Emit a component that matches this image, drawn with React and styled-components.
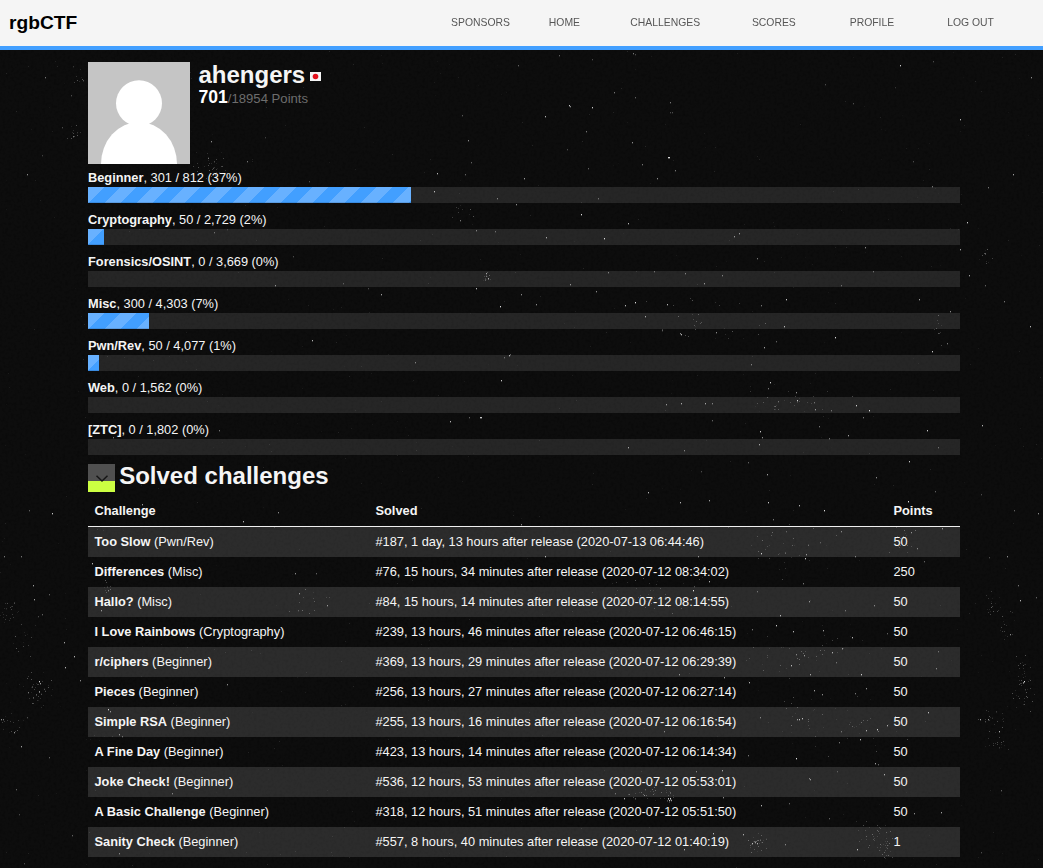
import React from "react";
import styled, { createGlobalStyle } from "styled-components";

const GlobalStyle = createGlobalStyle`
  * { box-sizing: border-box; }
  html, body { margin: 0; padding: 0; }
  body {
    background: #0c0c0c;
    color: #f5f5f5;
    font-family: "Liberation Sans", Arial, sans-serif;
    font-size: 12.8px;
    line-height: 18px;
  }
`;

const Page = styled.div`
  position: relative;
  height: 868px;
  overflow: hidden;
`;

const Dust = styled.svg`
  position: absolute;
  inset: 0;
  z-index: -1;
`;

const Header = styled.header`
  display: flex;
  justify-content: space-between;
  height: 50px;
  padding-left: 9px;
  background: #f5f5f5;
  border-bottom: 4px solid #429fff;
`;

const Brand = styled.div`
  color: #000;
  font-size: 19.2px;
  font-weight: bold;
  line-height: 45px;
`;

const Nav = styled.nav`
  display: grid;
  grid-template-columns: 97.8px 81.4px 121.7px 97.8px 97.5px 95.8px;
  font-size: 10.4px;
  line-height: 46px;
  color: #555;
  text-transform: uppercase;
`;

const NavItem = styled.a`
  opacity: 0.99;
`;

const Main = styled.main`
  width: 872px;
  margin: 12px 0 0 88px;
`;

const Profile = styled.section`
  display: flex;
  gap: 8.5px;
  height: 102px;
  margin-bottom: 3px;
`;

const UserName = styled.h2`
  display: flex;
  align-items: center;
  gap: 5px;
  margin: 0;
  font-size: 24px;
  line-height: 26px;
`;

const FlagIcon = styled.svg`
  margin-top: 2px;
`;

const Score = styled.div`
  color: #6d6d6d;
  font-size: 13.12px;
  line-height: 20px;
  height: 20px;
  margin-top: -1px;
`;

const ScoreValue = styled.b`
  color: #fff;
  font-size: 17.6px;
`;

const Category = styled.section`
  height: 42px;
`;

const CategoryLabel = styled.div`
  height: 20px;
  line-height: 18px;
  padding-top: 2px;
`;

const Track = styled.div`
  height: 16px;
  background: rgba(255, 255, 255, 0.105);
`;

const Fill = styled.div`
  height: 16px;
  background: linear-gradient(
      135deg,
      #68b1ff 25%,
      #429fff 25%,
      #429fff 50%,
      #68b1ff 50%,
      #68b1ff 75%,
      #429fff 75%
    )
    0 0 / 32px 32px;
  box-shadow: inset 0 -1px 0 rgba(0, 0, 0, 0.12);
`;

const SolvedHeading = styled.div`
  display: flex;
  align-items: flex-start;
  gap: 4.2px;
  height: 32px;
  margin-top: 3px;

  h2 {
    margin: 0;
    font-size: 24px;
    line-height: 23px;
  }
`;

const Toggle = styled.button`
  display: flex;
  width: 27px;
  height: 28px;
  padding: 0;
  border: 0;
  background: linear-gradient(#505050 17px, #ccff42 17px);
`;

const Table = styled.table`
  width: 100%;
  table-layout: fixed;
  border-collapse: separate;
  border-spacing: 0;
  text-align: left;

  th, td {
    height: 30px;
    padding: 0 6.5px;
    line-height: 18px;
  }

  th {
    height: 31px;
    border-bottom: 1px solid #f0f0f0;
  }

  tbody tr:nth-child(odd) {
    background: rgba(255, 255, 255, 0.13);
  }
`;

const NAV = ["Sponsors", "Home", "Challenges", "Scores", "Profile", "Log out"];

const CATEGORIES = [
  ["Beginner", "301 / 812 (37%)", 323],
  ["Cryptography", "50 / 2,729 (2%)", 16],
  ["Forensics/OSINT", "0 / 3,669 (0%)", 0],
  ["Misc", "300 / 4,303 (7%)", 61],
  ["Pwn/Rev", "50 / 4,077 (1%)", 11],
  ["Web", "0 / 1,562 (0%)", 0],
  ["[ZTC]", "0 / 1,802 (0%)", 0],
];

const SOLVES = [
  ["Too Slow", "Pwn/Rev", "#187, 1 day, 13 hours after release (2020-07-13 06:44:46)", 50],
  ["Differences", "Misc", "#76, 15 hours, 34 minutes after release (2020-07-12 08:34:02)", 250],
  ["Hallo?", "Misc", "#84, 15 hours, 14 minutes after release (2020-07-12 08:14:55)", 50],
  ["I Love Rainbows", "Cryptography", "#239, 13 hours, 46 minutes after release (2020-07-12 06:46:15)", 50],
  ["r/ciphers", "Beginner", "#369, 13 hours, 29 minutes after release (2020-07-12 06:29:39)", 50],
  ["Pieces", "Beginner", "#256, 13 hours, 27 minutes after release (2020-07-12 06:27:14)", 50],
  ["Simple RSA", "Beginner", "#255, 13 hours, 16 minutes after release (2020-07-12 06:16:54)", 50],
  ["A Fine Day", "Beginner", "#423, 13 hours, 14 minutes after release (2020-07-12 06:14:34)", 50],
  ["Joke Check!", "Beginner", "#536, 12 hours, 53 minutes after release (2020-07-12 05:53:01)", 50],
  ["A Basic Challenge", "Beginner", "#318, 12 hours, 51 minutes after release (2020-07-12 05:51:50)", 50],
  ["Sanity Check", "Beginner", "#557, 8 hours, 40 minutes after release (2020-07-12 01:40:19)", 1],
];

// Single dust specks: x, y, brightness.
const SPECKS = [
  [45, 77, 0.5], [73, 66, 0.2], [83, 80, 0.35], [71, 95, 0.3], [62, 127, 0.3], [73, 136, 0.5], [77, 132, 0.2],
  [42, 155, 0.25], [27, 174, 0.6], [211, 141, 0.6], [247, 161, 0.5], [265, 137, 0.25], [309, 181, 0.3],
  [559, 55, 0.4], [633, 53, 0.5], [635, 54, 0.3], [592, 59, 0.3], [518, 65, 0.4], [900, 65, 0.9], [933, 61, 0.3],
  [1031, 77, 0.6], [825, 84, 0.3], [895, 87, 0.2], [614, 92, 0.5], [635, 97, 0.4], [569, 105, 0.9], [570, 106, 0.6],
  [592, 107, 0.9], [670, 102, 0.5], [670, 112, 0.3], [672, 112, 0.3], [462, 115, 0.35], [545, 116, 0.8],
  [853, 103, 0.3], [960, 119, 0.8], [586, 131, 0.5], [468, 140, 0.6], [632, 142, 0.6], [567, 149, 0.3],
  [668, 157, 1], [669, 157, 1], [471, 162, 0.4], [588, 168, 0.4], [642, 164, 0.5], [675, 170, 0.5], [437, 173, 0.8],
  [465, 174, 0.4], [524, 178, 0.7], [657, 178, 0.6], [1013, 174, 0.7], [988, 187, 0.5], [913, 161, 0.3],
  [434, 191, 0.8], [497, 198, 0.5], [598, 198, 0.4], [516, 204, 0.6], [932, 186, 0.5], [581, 214, 1],
  [460, 220, 0.5], [628, 223, 0.8], [967, 222, 0.9], [476, 230, 0.5], [495, 231, 0.4], [546, 237, 0.7],
  [604, 238, 1], [734, 236, 0.6], [739, 233, 0.6], [865, 247, 0.6], [960, 249, 0.7], [985, 253, 0.4],
  [757, 258, 0.5], [214, 232, 0.4], [227, 229, 0.2], [293, 256, 0.3], [275, 285, 0.6], [343, 283, 0.3],
  [488, 278, 0.7], [486, 273, 0.6], [608, 272, 0.5], [654, 271, 0.4], [685, 273, 0.5], [722, 275, 0.5],
  [704, 283, 0.6], [873, 271, 0.4], [841, 285, 0.4], [570, 284, 0.6], [969, 275, 0.7], [985, 285, 0.4],
  [476, 288, 0.8], [596, 291, 0.6], [521, 294, 0.6], [381, 294, 0.7], [500, 306, 1], [536, 304, 0.6],
  [625, 305, 0.8], [635, 302, 1], [667, 304, 0.8], [786, 299, 0.9], [761, 305, 0.5], [919, 299, 0.7],
  [1004, 301, 0.5], [950, 311, 0.6], [368, 288, 0.3], [645, 316, 0.7], [784, 326, 0.8],
  [1030, 326, 0.8], [662, 330, 0.4], [680, 333, 0.6], [681, 334, 0.8], [716, 332, 0.6], [835, 337, 1],
  [764, 347, 0.7], [776, 341, 0.4], [932, 351, 0.9], [947, 343, 0.5], [312, 340, 0.8], [415, 362, 0.5],
  [509, 355, 0.8], [510, 354, 0.4], [504, 357, 0.4], [751, 364, 0.5], [501, 380, 0.9], [770, 382, 0.9],
  [768, 388, 0.5], [796, 392, 0.6], [797, 400, 0.9], [712, 403, 0.5], [666, 404, 0.6], [681, 403, 0.7],
  [705, 403, 0.7], [856, 405, 0.9], [869, 410, 1], [778, 401, 0.4], [814, 402, 0.4], [815, 409, 0.6],
  [831, 410, 0.4], [480, 417, 0.9], [481, 417, 0.9], [450, 421, 0.8], [469, 417, 0.4], [863, 417, 0.5],
  [712, 420, 0.4], [819, 426, 0.5], [760, 431, 0.9], [762, 437, 0.6], [927, 430, 0.9], [848, 435, 0.7],
  [829, 438, 0.5], [759, 444, 0.7], [628, 447, 0.7], [684, 450, 0.5], [938, 447, 0.4],
  [909, 461, 0.9], [748, 462, 0.4], [701, 471, 0.3], [648, 492, 0.8], [680, 502, 0.8], [709, 500, 0.7],
  [768, 502, 0.9], [799, 505, 0.8], [824, 510, 1], [908, 501, 1], [935, 491, 0.4], [1038, 513, 0.6],
  [1014, 510, 0.4], [981, 494, 0.3], [773, 519, 0.5], [786, 531, 0.3], [841, 531, 0.5], [942, 528, 0.6],
  [820, 542, 0.3], [761, 553, 0.9], [805, 558, 0.9], [806, 554, 0.6], [698, 556, 0.6], [855, 556, 0.5],
  [911, 532, 0.5], [917, 548, 0.5], [1007, 556, 0.6], [989, 557, 0.3], [924, 561, 0.4], [709, 581, 0.8],
  [693, 590, 1], [803, 583, 0.5], [695, 571, 0.3], [757, 591, 0.4], [809, 601, 0.6], [780, 615, 0.8],
  [845, 610, 0.4], [874, 605, 0.5], [1018, 585, 0.5], [1020, 600, 0.8], [1036, 597, 0.4], [776, 625, 0.9],
  [752, 629, 0.5], [793, 631, 0.8], [823, 630, 0.7], [852, 637, 0.8], [887, 633, 0.4], [1010, 634, 0.6],
  [832, 652, 0.7], [842, 648, 0.6], [836, 662, 0.4], [796, 654, 0.5], [804, 655, 0.6], [791, 665, 0.8],
  [810, 674, 0.7], [861, 674, 0.9], [724, 677, 0.7], [679, 674, 0.6], [749, 682, 0.8], [936, 668, 0.5],
  [938, 651, 0.4], [814, 690, 0.7], [822, 694, 0.6], [866, 688, 0.6], [855, 693, 0.5], [928, 712, 0.8],
  [797, 719, 0.6], [799, 719, 0.8], [802, 718, 0.8], [760, 717, 0.5], [877, 729, 0.9], [866, 730, 0.7],
  [887, 725, 0.7], [841, 731, 0.4], [860, 739, 0.8], [839, 742, 0.5], [664, 731, 0.5], [748, 755, 0.5],
  [796, 758, 1], [875, 763, 0.7], [878, 764, 0.4], [810, 779, 0.6], [809, 778, 0.5], [884, 774, 0.7],
  [696, 771, 0.5], [722, 770, 0.7], [837, 771, 0.3], [723, 797, 0.6], [761, 805, 0.8], [789, 803, 0.4],
  [624, 798, 0.8], [615, 793, 0.4], [914, 813, 0.6], [941, 812, 0.7], [829, 818, 0.4], [743, 834, 0.7],
  [785, 844, 0.5], [857, 849, 0.8], [684, 849, 0.7], [757, 843, 0.7], [713, 833, 0.8], [1001, 790, 0.4],
  [668, 798, 0.9], [670, 798, 0.9], [669, 800, 0.8], [671, 800, 0.5], [752, 843, 0.8], [755, 842, 0.6],
  [981, 852, 0.3], [982, 425, 0.8], [980, 719, 0.7], [988, 719, 0.6], [999, 731, 0.8], [1024, 681, 1],
  [1023, 682, 0.6], [29, 510, 0.4], [52, 513, 0.9], [4, 556, 0.5], [21, 556, 0.5], [33, 585, 0.7],
  [34, 599, 0.7], [49, 594, 0.4], [42, 614, 0.4], [38, 616, 0.3], [64, 642, 0.7], [74, 656, 0.8],
  [65, 667, 0.8], [80, 680, 0.6], [92, 563, 0.8], [39, 681, 1], [40, 683, 0.7], [39, 691, 0.6], [28, 692, 0.5],
  [1, 719, 0.6], [3, 719, 0.5], [14, 732, 0.6], [21, 746, 0.7], [27, 717, 0.3], [49, 757, 0.4], [16, 789, 0.4],
  [19, 814, 0.3], [72, 835, 0.4], [24, 863, 0.3], [108, 709, 0.9], [110, 711, 0.6], [119, 734, 0.6],
  [122, 736, 0.4], [139, 772, 0.4], [227, 684, 0.6], [101, 610, 0.6], [108, 590, 0.5], [102, 599, 0.3],
  [172, 793, 0.5], [119, 853, 0.5], [243, 521, 0.8], [142, 504, 0.7], [278, 512, 0.6], [274, 526, 0.5],
  [298, 610, 0.3], [327, 605, 0.6], [299, 593, 0.6], [316, 573, 0.4], [295, 573, 0.6], [219, 430, 0.5],
  [113, 437, 0.5], [220, 473, 0.3], [876, 477, 0.6], [767, 474, 0.7], [545, 556, 0.8], [521, 524, 0.6],
  [585, 545, 0.4], [470, 573, 0.6],
];

// Patches of fine scratches: centre x, centre y, spread x, spread y, count.
const CLUSTERS = [
  [209, 166, 18, 22, 40], [310, 600, 24, 20, 12], [487, 276, 6, 6, 16], [992, 605, 10, 16, 20],
  [1005, 625, 14, 20, 14], [1022, 665, 10, 18, 14], [1022, 690, 14, 24, 34], [992, 722, 16, 18, 24],
  [997, 745, 16, 8, 14], [875, 836, 22, 16, 34], [886, 850, 10, 10, 20], [753, 842, 14, 12, 28],
  [650, 794, 28, 9, 34], [669, 799, 3, 3, 12], [38, 688, 20, 20, 44], [8, 612, 12, 14, 24],
  [22, 640, 12, 20, 12], [8, 725, 18, 22, 20], [107, 586, 6, 20, 16], [640, 595, 70, 22, 40],
  [800, 655, 60, 24, 34], [840, 725, 70, 34, 44], [795, 400, 70, 22, 28], [700, 320, 70, 28, 28],
  [905, 540, 20, 20, 18], [780, 550, 60, 30, 30], [80, 78, 10, 10, 8], [74, 132, 8, 10, 10],
  [986, 258, 12, 12, 10], [938, 325, 8, 22, 10], [462, 213, 14, 14, 10],
];

const scatter = () => {
  let seed = 71;
  const next = () => {
    seed = (seed * 16807) % 2147483647;
    return seed / 2147483647;
  };
  const marks = [];
  CLUSTERS.forEach(([cx, cy, rx, ry, count]) => {
    for (let i = 0; i < count; i += 1) {
      const dx = (next() + next() - 1) * rx;
      const dy = (next() + next() - 1) * ry;
      marks.push([Math.round(cx + dx), Math.round(cy + dy), 0.06 + next() * 0.25]);
    }
  });
  for (let i = 0; i < 650; i += 1) {
    marks.push([Math.floor(next() * 1043), 50 + Math.floor(next() * 818), 0.02 + next() * 0.09]);
  }
  return marks;
};

const FAINT = scatter();

const DustLayer = () => (
  <Dust width="1043" height="868" shapeRendering="crispEdges" aria-hidden="true">
    <filter id="grain" x="0" y="0" width="100%" height="100%">
      <feTurbulence type="fractalNoise" baseFrequency="0.35" numOctaves="2" seed="4" />
      <feColorMatrix values="0 0 0 0 0  0 0 0 0 0  0 0 0 0 0  2 0 0 0 -0.95" />
    </filter>
    <rect width="1043" height="868" fill="#0d0d0d" />
    <rect width="1043" height="868" filter="url(#grain)" opacity="0.3" />
    {FAINT.map(([x, y, a], i) => (
      <rect key={i} x={x} y={y} width="1" height="1" fill="#fff" opacity={a} />
    ))}
    {SPECKS.map(([x, y, a], i) => (
      <g key={i} fill="#fff">
        <rect x={x} y={y} width="1" height="1" opacity={a * 0.85} />
        <rect x={x} y={y + 1} width="1" height="1" opacity={a * 0.3} />
      </g>
    ))}
  </Dust>
);

const Avatar = () => (
  <svg width="102" height="102" viewBox="0 0 102 102">
    <rect width="102" height="102" fill="#c5c5c5" />
    <circle cx="51" cy="41.2" r="23" fill="#fff" />
    <ellipse cx="51" cy="102" rx="38" ry="42" fill="#fff" />
  </svg>
);

const Flag = () => (
  <FlagIcon width="11" height="9" viewBox="0 0 11 9">
    <rect width="11" height="9" fill="#f5f5f5" />
    <circle cx="5.5" cy="4.5" r="2.8" fill="#e3101c" />
  </FlagIcon>
);

const Chevron = () => (
  <svg width="27" height="28" viewBox="0 0 27 28" fill="none">
    <path d="M8.5 11.8L14 17L19.5 11.8" stroke="#161616" strokeWidth="1.5" />
  </svg>
);

export default function App() {
  return (
    <Page>
      <GlobalStyle />
      <DustLayer />
      <Header>
        <Brand>rgbCTF</Brand>
        <Nav>
          {NAV.map((label) => (
            <NavItem key={label}>{label}</NavItem>
          ))}
        </Nav>
      </Header>
      <Main>
        <Profile>
          <Avatar />
          <div>
            <UserName>
              ahengers
              <Flag />
            </UserName>
            <Score>
              <ScoreValue>701</ScoreValue>/18954 Points
            </Score>
          </div>
        </Profile>
        {CATEGORIES.map(([name, stats, width]) => (
          <Category key={name}>
            <CategoryLabel>
              <b>{name}</b>, {stats}
            </CategoryLabel>
            <Track>
              <Fill style={{ width }} />
            </Track>
          </Category>
        ))}
        <SolvedHeading>
          <Toggle aria-label="Toggle solved challenges">
            <Chevron />
          </Toggle>
          <h2>Solved challenges</h2>
        </SolvedHeading>
        <Table>
          <colgroup>
            <col style={{ width: 281 }} />
            <col style={{ width: 518 }} />
            <col />
          </colgroup>
          <thead>
            <tr>
              <th>Challenge</th>
              <th>Solved</th>
              <th>Points</th>
            </tr>
          </thead>
          <tbody>
            {SOLVES.map(([name, category, solved, points]) => (
              <tr key={name}>
                <td>
                  <b>{name}</b> ({category})
                </td>
                <td>{solved}</td>
                <td>{points}</td>
              </tr>
            ))}
          </tbody>
        </Table>
      </Main>
    </Page>
  );
}
